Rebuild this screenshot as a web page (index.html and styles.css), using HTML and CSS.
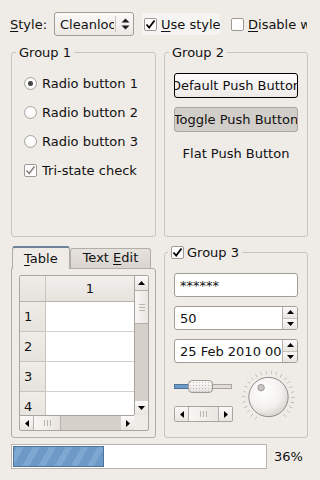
FILE: index.html
```html
<!DOCTYPE html>
<html lang="en">
<head>
    <meta charset="UTF-8">
    <title>Styles</title>
    <link rel="stylesheet" href="styles.css">
</head>
<body>
<div class="window">
    <!-- top bar -->
    <div class="topbar">
        <span class="style-label"><u>S</u>tyle:</span>
        <div class="combo">
            <span class="combo-text">Cleanlooks</span>
            <span class="combo-sep"></span>
            <svg class="combo-arrows" width="9" height="12" viewBox="0 0 9 12">
                <path d="M4.5 0.5 L8.5 4.5 L0.5 4.5 Z M0.5 7.5 L8.5 7.5 L4.5 11.5 Z" fill="#1a1a1a"/>
            </svg>
        </div>
        <div class="check check-use">
            <span class="box"><svg width="11" height="11" viewBox="0 0 11 11"><path d="M1.5 5.5 L4.2 8.6 L9.5 1.5" fill="none" stroke="#000" stroke-width="1.8"/></svg></span>
            <span class="check-text"><u>U</u>se style's standard palette</span>
        </div>
        <div class="check check-disable">
            <span class="box"></span>
            <span class="check-text"><u>D</u>isable widgets</span>
        </div>
    </div>

    <div class="grid">
        <fieldset class="group">
            <legend>Group 1</legend>
            <div class="group-body radios">
                <div class="radio-row"><span class="radio checked"></span>Radio button 1</div>
                <div class="radio-row"><span class="radio"></span>Radio button 2</div>
                <div class="radio-row"><span class="radio"></span>Radio button 3</div>
                <div class="radio-row tri"><span class="box small"><svg width="11" height="11" viewBox="0 0 11 11"><path d="M1.5 5.5 L4.2 8.6 L9.5 1.5" fill="none" stroke="#8a8580" stroke-width="1.6"/></svg></span><span class="clip">Tri-state check box</span></div>
            </div>
        </fieldset>

        <fieldset class="group">
            <legend>Group 2</legend>
            <div class="group-body buttons">
                <div class="btn btn-default"><span>Default Push Button</span></div>
                <div class="btn btn-toggle"><span>Toggle Push Button</span></div>
                <div class="btn btn-flat"><span>Flat Push Button</span></div>
            </div>
        </fieldset>

        <div class="tabs">
            <div class="tabbar">
                <div class="tab tab-active"><u>T</u>able</div>
                <div class="tab">Text <u>E</u>dit</div>
            </div>
            <div class="pane">
                <div class="table">
                    <div class="table-main">
                        <div class="thead">
                            <div class="corner"></div>
                            <div class="colhead">1</div>
                        </div>
                        <div class="trow"><div class="rowhead">1</div><div class="cell"></div></div>
                        <div class="trow"><div class="rowhead">2</div><div class="cell"></div></div>
                        <div class="trow"><div class="rowhead">3</div><div class="cell"></div></div>
                        <div class="trow"><div class="rowhead">4</div><div class="cell"></div></div>
                    </div>
                    <div class="vscroll">
                        <div class="sb-btn"><svg width="7" height="4" viewBox="0 0 7 4"><path d="M3.5 0 L7 4 L0 4 Z" fill="#000"/></svg></div>
                        <div class="sb-handle v"><span class="grip-h"></span></div>
                        <div class="sb-trough"></div>
                        <div class="sb-btn"><svg width="7" height="4" viewBox="0 0 7 4"><path d="M0 0 L7 0 L3.5 4 Z" fill="#000"/></svg></div>
                    </div>
                    <div class="hscroll">
                        <div class="sb-btn"><svg width="4" height="7" viewBox="0 0 4 7"><path d="M0 3.5 L4 0 L4 7 Z" fill="#000"/></svg></div>
                        <div class="sb-handle h"><span class="grip-v"></span></div>
                        <div class="sb-trough"></div>
                        <div class="sb-btn"><svg width="4" height="7" viewBox="0 0 4 7"><path d="M0 0 L4 3.5 L0 7 Z" fill="#000"/></svg></div>
                    </div>
                </div>
            </div>
        </div>

        <fieldset class="group">
            <legend class="legend-check"><span class="box"><svg width="11" height="11" viewBox="0 0 11 11"><path d="M1.5 5.5 L4.2 8.6 L9.5 1.5" fill="none" stroke="#000" stroke-width="1.8"/></svg></span>Group 3</legend>
            <div class="group-body inputs">
                <div class="field">******</div>
                <div class="field spin">
                    <span class="spin-text">50</span>
                    <div class="spin-btns">
                        <span><svg width="7" height="4" viewBox="0 0 7 4"><path d="M3.5 0 L7 4 L0 4 Z" fill="#000"/></svg></span>
                        <span><svg width="7" height="4" viewBox="0 0 7 4"><path d="M0 0 L7 0 L3.5 4 Z" fill="#000"/></svg></span>
                    </div>
                </div>
                <div class="field spin">
                    <span class="spin-text">25 Feb 2010 00:00</span>
                    <div class="spin-btns">
                        <span><svg width="7" height="4" viewBox="0 0 7 4"><path d="M3.5 0 L7 4 L0 4 Z" fill="#000"/></svg></span>
                        <span><svg width="7" height="4" viewBox="0 0 7 4"><path d="M0 0 L7 0 L3.5 4 Z" fill="#000"/></svg></span>
                    </div>
                </div>
                <div class="controls">
                    <div class="control-col">
                        <div class="slider">
                            <div class="slider-fill"></div>
                            <div class="slider-handle"></div>
                            <div class="slider-rest"></div>
                        </div>
                        <div class="hscroll small">
                            <div class="sb-btn"><svg width="4" height="7" viewBox="0 0 4 7"><path d="M0 3.5 L4 0 L4 7 Z" fill="#000"/></svg></div>
                            <div class="sb-handle h wide"><span class="grip-v"></span></div>
                            <div class="sb-btn"><svg width="4" height="7" viewBox="0 0 4 7"><path d="M0 0 L4 3.5 L0 7 Z" fill="#000"/></svg></div>
                        </div>
                    </div>
                    <svg class="dial" width="60" height="60" viewBox="0 0 60 60">
                        <defs>
                            <radialGradient id="dialFill" cx="0.4" cy="0.35" r="0.7">
                                <stop offset="0" stop-color="#ffffff"/>
                                <stop offset="0.6" stop-color="#f4f2f0"/>
                                <stop offset="1" stop-color="#d6d2cd"/>
                            </radialGradient>
                        </defs>
                        <path d="M17.5 51.65 A25 25 0 1 1 42.5 51.65" fill="none" stroke="#8c8782" stroke-width="3.5" pathLength="300" stroke-dasharray="0.9 11.1"/>
                        <circle cx="30" cy="30" r="20" fill="url(#dialFill)" stroke="#8f8a85"/>
                        <circle cx="22.5" cy="20.5" r="3.3" fill="#c9c5c0" stroke="#8f8a85" stroke-width="0.8"/>
                    </svg>
                </div>
            </div>
        </fieldset>
    </div>

    <div class="progress-row">
        <div class="progress">
            <div class="progress-chunk" style="width: 36%"></div>
        </div>
        <span class="progress-text">36%</span>
    </div>
</div>
</body>
</html>
```

FILE: styles.css
```css
* {
    box-sizing: border-box;
}

body {
    margin: 0;
    background: #efebe7;
    font-family: "DejaVu Sans", sans-serif;
    font-size: 13px;
    color: #111;
}

u {
    text-decoration-thickness: 1px;
    text-underline-offset: 2px;
}

.window {
    width: 320px;
    height: 480px;
    padding: 12px 12px 0 11px;
    overflow: hidden;
}

/* top bar */
.topbar {
    display: flex;
    align-items: center;
    height: 24px;
}

.style-label {
    width: 44px;
    margin-left: -1px;
}

.combo {
    display: flex;
    align-items: center;
    width: 80px;
    height: 24px;
    border: 1px solid #a19c96;
    border-radius: 3px;
    background: linear-gradient(#fbfaf9, #ebe7e3);
    padding-left: 5px;
    overflow: hidden;
}

.combo-text {
    width: 54px;
    overflow: hidden;
    white-space: nowrap;
}

.combo-sep {
    width: 1px;
    height: 16px;
    background: #c9c4be;
    margin: 0 5px 0 1px;
}

.check {
    display: flex;
    align-items: center;
    height: 22px;
    overflow: hidden;
    white-space: nowrap;
}

.check-use {
    width: 78px;
    margin-left: 8px;
    padding-left: 2px;
    background: #f6f4f2;
}

.check-disable {
    width: 78px;
    margin-left: 9px;
    padding-left: 2px;
}

.check-text {
    margin-left: 4px;
}

.box {
    display: inline-flex;
    align-items: center;
    justify-content: center;
    flex: none;
    width: 13px;
    height: 13px;
    border: 1px solid #9d9893;
    border-radius: 2px;
    background: #fff;
}

/* grid of groups */
.grid {
    display: grid;
    grid-template-columns: 145px 144px;
    grid-template-rows: 192px 193px;
    column-gap: 8px;
    row-gap: 8px;
    margin-top: 9px;
}

.group {
    margin: 0;
    padding: 0;
    border: 1px solid #c8c3bd;
    border-radius: 3px;
    min-width: 0;
}

.group legend {
    margin-left: 4px;
    padding: 0 3px;
    line-height: 15px;
}

.legend-check {
    display: flex;
    align-items: center;
    gap: 3px;
    margin-left: 3px !important;
    padding-left: 3px !important;
}

.group-body {
    display: flex;
    flex-direction: column;
}

.radios {
    padding: 13px 0 0 12px;
    gap: 9px;
}

.radio-row {
    display: flex;
    align-items: center;
    height: 20px;
    gap: 5px;
    white-space: nowrap;
}

.clip {
    width: 99px;
    overflow: hidden;
}

.radio {
    width: 13px;
    height: 13px;
    border-radius: 50%;
    border: 1px solid #aaa59f;
    background: radial-gradient(circle at 50% 40%, #fff 40%, #ece9e6);
}

.radio.checked {
    background: radial-gradient(circle at 50% 50%, #3c3c3c 0, #555 2.2px, #fff 3px, #fff 40%, #ece9e6);
}

.buttons {
    padding: 13px 9px 0 9px;
    gap: 9px;
}

.btn {
    display: flex;
    justify-content: center;
    align-items: center;
    height: 25px;
    overflow: hidden;
    white-space: nowrap;
    border-radius: 3px;
}

.btn-default {
    border: 1px solid #000;
    background: linear-gradient(#fdfcfc, #edeae7);
}

.btn-toggle {
    border: 1px solid #a9a49e;
    background: #d1cdc8;
}

/* tabs */
.tabs {
    display: flex;
    flex-direction: column;
}

.tabbar {
    display: flex;
    align-items: flex-end;
    height: 23px;
    padding-left: 1px;
}

.tab {
    height: 20px;
    padding: 1px 12px 0 12px;
    border: 1px solid #b2ada7;
    border-bottom: none;
    border-radius: 3px 3px 0 0;
    background: linear-gradient(#e6e2de, #d9d4cf);
}

.tab-active {
    height: 23px;
    padding: 3px 11px 0 11px;
    border-top: 2px solid #6f8299;
    background: #efebe7;
    position: relative;
    z-index: 1;
    margin-bottom: -1px;
}

.pane {
    flex: 1;
    border: 1px solid #b2ada7;
    border-radius: 0 3px 3px 3px;
    padding: 6px 7px 0 7px;
}

.table {
    display: grid;
    grid-template-columns: 114px 14px;
    grid-template-rows: 139px 15px;
    width: 130px;
    border: 1px solid #a9a49e;
    border-radius: 2px;
    background: #efebe7;
}

.table-main {
    overflow: hidden;
    background: #fff;
}

.thead,
.trow {
    display: flex;
}

.thead {
    height: 26px;
    border-bottom: 1px solid #b9b4ae;
}

.corner,
.rowhead {
    width: 26px;
    flex: none;
    background: linear-gradient(#f0ece8, #e6e2de);
    border-right: 1px solid #c9c4be;
}

.colhead {
    flex: 1;
    display: flex;
    align-items: center;
    justify-content: center;
    background: linear-gradient(#f2efec, #e6e2de);
}

.trow {
    height: 30px;
}

.rowhead {
    display: flex;
    align-items: center;
    padding-left: 4px;
    border-bottom: 1px solid #c9c4be;
}

.cell {
    flex: 1;
    border-bottom: 1px solid #d3d0cc;
}

/* scrollbars */
.vscroll {
    display: flex;
    flex-direction: column;
    border-left: 1px solid #a9a49e;
}

.hscroll {
    display: flex;
    border-top: 1px solid #a9a49e;
    grid-column: 1 / 2;
}

.sb-btn {
    display: flex;
    align-items: center;
    justify-content: center;
    flex: none;
    width: 13px;
    height: 14px;
    background: linear-gradient(#fbfaf9, #e8e4e0);
}

.vscroll .sb-btn {
    width: auto;
}

.sb-handle {
    display: flex;
    align-items: center;
    justify-content: center;
    background: linear-gradient(90deg, #f8f6f4, #e9e5e1);
    border: 1px solid #b5b0aa;
}

.sb-handle.v {
    height: 34px;
    border-left: none;
    border-right: none;
}

.sb-handle.h {
    width: 28px;
    border-top: none;
    border-bottom: none;
}

.sb-trough {
    flex: 1;
    background: #d5d0ca;
}

.grip-h {
    width: 6px;
    height: 7px;
    background: repeating-linear-gradient(#b8b3ad 0 1px, transparent 1px 3px);
}

.grip-v {
    width: 7px;
    height: 6px;
    background: repeating-linear-gradient(90deg, #b8b3ad 0 1px, transparent 1px 3px);
}

/* group 3 */
.inputs {
    padding: 13px 9px 0 9px;
    gap: 9px;
}

.field {
    display: flex;
    align-items: center;
    height: 24px;
    padding-left: 5px;
    border: 1px solid #a19c96;
    border-radius: 3px;
    background: #fff;
    white-space: nowrap;
    overflow: hidden;
}

.spin {
    padding-right: 0;
}

.spin-text {
    flex: 1;
    overflow: hidden;
}

.spin-btns {
    display: flex;
    flex-direction: column;
    width: 15px;
    height: 100%;
    border-left: 1px solid #b5b0aa;
}

.spin-btns span {
    flex: 1;
    display: flex;
    align-items: center;
    justify-content: center;
    background: linear-gradient(#fbfaf9, #e8e4e0);
}

.spin-btns span + span {
    border-top: 1px solid #c9c4be;
}

.controls {
    display: flex;
    margin-top: -3px;
}

.control-col {
    display: flex;
    flex-direction: column;
    gap: 13px;
    padding-top: 11px;
}

.slider {
    display: flex;
    align-items: center;
    width: 58px;
    height: 13px;
}

.slider-fill {
    width: 14px;
    height: 5px;
    background: #6f9bc9;
    border: 1px solid #4e7398;
    border-right: none;
}

.slider-handle {
    width: 25px;
    height: 13px;
    border: 1px solid #9e9993;
    border-radius: 4px;
    background: radial-gradient(circle, #c0bbb5 0.6px, transparent 0.7px) 0 0 / 3px 3px, linear-gradient(#fdfcfc, #e4e0dc);
    background-clip: padding-box;
}

.slider-rest {
    flex: 1;
    height: 5px;
    border: 1px solid #aaa59f;
    border-left: none;
    background: #e1ddd8;
}

.hscroll.small {
    width: 59px;
    height: 16px;
    border: 1px solid #a9a49e;
    border-radius: 2px;
}

.hscroll.small .sb-btn {
    height: 14px;
}

.sb-handle.wide {
    flex: 1;
    width: auto;
    border-top: none;
    border-bottom: none;
}

.dial {
    margin: -2px 0 0 6px;
}

/* progress */
.progress-row {
    display: flex;
    align-items: center;
    margin-top: 6px;
    height: 25px;
}

.progress {
    width: 256px;
    height: 25px;
    border: 1px solid #b8b3ad;
    background: #fff;
    padding: 1px;
}

.progress-chunk {
    height: 100%;
    border: 1px solid #4f7498;
    background: repeating-linear-gradient(-60deg, #6c99c7 0 8px, #7ea7d2 8px 14px);
}

.progress-text {
    margin-left: 7px;
}
```
